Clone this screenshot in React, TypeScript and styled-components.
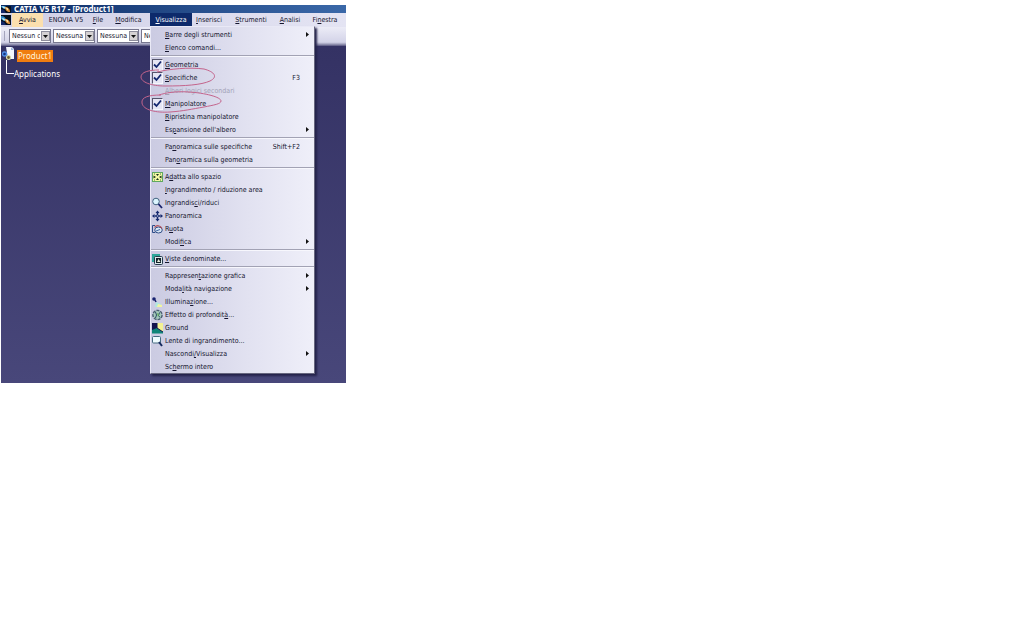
import React from "react";
import styled, { createGlobalStyle, css } from "styled-components";

const GlobalStyle = createGlobalStyle`
  *, *::before, *::after { box-sizing: border-box; }
  body { margin: 0; background: #fff; }
  button, select, input { font: inherit; color: inherit; margin: 0; }
`;

const Page = styled.main`
  padding: 5px 1px;
  font-family: "DejaVu Sans Condensed", "Noto Sans", sans-serif;
  font-size: 7px;
  color: #15152e;
`;

const Window = styled.section`
  position: relative;
  display: flex;
  flex-direction: column;
  width: 100%;
  max-width: 345px;
  background: #403f70;
`;

const TitleBar = styled.header`
  display: flex;
  align-items: center;
  gap: 3px;
  height: 8px;
  background: linear-gradient(90deg, #0b2a63, #2d5796 70%, #3a68a8);
`;

const Title = styled.h1`
  margin: 0;
  font-family: "Noto Sans", sans-serif;
  font-size: 8px;
  line-height: 12px;
  font-weight: 700;
  color: #fff;
  white-space: nowrap;
`;

const MenuBar = styled.nav`
  display: flex;
  align-items: stretch;
  height: 14px;
  background: linear-gradient(90deg, #cfcfe6, #e4e4f3);
`;

const LogoSlot = styled.span`
  display: flex;
  align-items: center;
  width: 11px;
`;

const MenuButton = styled.button<{ $w: number; $tone?: "start" | "open" }>`
  flex: 0 0 ${(p) => p.$w}px;
  padding: 0;
  border: 0;
  background: transparent;
  line-height: 13px;
  text-align: center;
  white-space: nowrap;
  ${(p) => p.$tone === "start" && css`background: #fbdfae;`}
  ${(p) => p.$tone === "open" && css`background: #0d2a6b; color: #fff;`}
`;

const ToolBar = styled.div`
  display: flex;
  align-items: center;
  gap: 2px;
  height: 19px;
  padding: 0 0 1px 3px;
  overflow: hidden;
  background: linear-gradient(180deg, #ececf7, #d3d3e8 80%, #9d9db9 90%, #55547f);
`;

const Grip = styled.span`
  width: 3px;
  height: 10px;
  border-left: 1px solid #a5a5bd;
`;

const ComboBox = styled.label`
  position: relative;
  flex: 0 0 42px;
  height: 14px;
`;

const Select = styled.select`
  appearance: none;
  display: block;
  width: 100%;
  height: 100%;
  padding: 0 10px 0 2px;
  border: 1px solid #77778f;
  border-radius: 0;
  background: #fff;
  line-height: 12px;
  text-overflow: clip;
`;

const ComboArrow = styled.span`
  position: absolute;
  top: 2px;
  right: 1px;
  display: grid;
  place-items: center;
  width: 9px;
  height: 10px;
  border: 1px solid #8e8e9c;
  background: #d5d2d3;
  pointer-events: none;
`;

const Workspace = styled.div`
  min-height: 337px;
  padding: 0 0 0 1px;
  background: linear-gradient(180deg, #343264, #48477a);
`;

const Tree = styled.div`
  display: flex;
  color: #fff;
  font-family: "Noto Sans", sans-serif;
  font-size: 8px;
  line-height: 12px;
`;

const TreeNodes = styled.div`
  display: flex;
  flex-direction: column;
  align-items: flex-start;
  padding-top: 4px;
`;

const TreeRoot = styled.button`
  margin-left: 3px;
  padding: 0 1px;
  border: 0;
  background: #f07d10;
  color: #fff3dc;
`;

const TreeChild = styled.button`
  margin-top: 6px;
  padding: 0;
  border: 0;
  background: none;
`;

const Menu = styled.div`
  position: absolute;
  top: 21px;
  left: 149px;
  width: 165px;
  padding: 1px 0 0;
  border: 1px solid #e9e9f6;
  border-right-color: #66667e;
  border-bottom-color: #66667e;
  background: linear-gradient(90deg, #cbcbe2, #e2e2f1 60%, #efeff9);
  box-shadow: 2px 2px 2px #24234a;
`;

const rowStyles = css`
  display: grid;
  grid-template-columns: 14px 1fr auto;
  align-items: center;
  width: 100%;
  height: 13px;
  padding: 0 14px 0 0;
  border: 0;
  background: none;
  line-height: 12px;
  text-align: left;
  white-space: nowrap;
`;

const MenuRow = styled.button`
  ${rowStyles}
  &:disabled { color: #a2a2b6; }
`;

const CheckRow = styled.label`
  ${rowStyles}
`;

const IconSlot = styled.span`
  position: relative;
  display: flex;
  align-items: center;
  height: 13px;
  padding-left: 1px;
`;

const Check = styled.input`
  appearance: none;
  width: 11px;
  height: 12px;
  border: 1px solid #f6f6fc;
  border-top-color: #55556c;
  border-left-color: #55556c;
  background: #e6e6f4;
`;

const CheckMark = styled.svg`
  position: absolute;
  top: 2px;
  left: 2px;
  pointer-events: none;
`;

const SubArrow = styled.svg`
  justify-self: end;
  margin-right: -10px;
`;

const Separator = styled.hr`
  height: 2px;
  margin: 1px 0;
  border: 0;
  border-top: 1px solid #a2a2b4;
  background: #f7f7fd;
`;

const Annotation = styled.svg`
  position: absolute;
  top: 62px;
  left: 138px;
  pointer-events: none;
`;

const AppLogo = ({ height = 10 }: { height?: number }) => (
  <svg width="10" height={height} viewBox={`0 ${10 - height} 10 ${height}`} aria-hidden="true">
    <rect width="10" height="10" fill="#06101f" />
    <path d="M0 1c3 0 5 2 5 4l-2 1-3-2z" fill="#2a86c4" />
    <path d="M1 3c2 0 3 1 4 3l-3-1z" fill="#bfeaf5" />
    <path d="M4 4c3 0 5 2 5 5-3 0-5-2-5-5z" fill="#e09440" />
    <path d="M4 4l3 1.500 0 2z" fill="#fff2c0" />
    <path d="M0 6l3 1 2 3H0z" fill="#14286a" />
  </svg>
);

const TreeIcon = () => (
  <svg width="12" height="32" viewBox="0 0 12 32" aria-hidden="true">
    <path d="M4 1h6l3 3v9H6z" fill="#f4f7ff" />
    <path d="M9 1l3 3H9z" fill="#9db8e0" />
    <circle cx="2.500" cy="8" r="2" fill="#16347f" stroke="#4f8fe8" strokeWidth="1.400" />
    <circle cx="6.500" cy="11.500" r="2" fill="#705b2c" stroke="#d7ddb0" strokeWidth="1.200" />
    <path d="M4.500 14v13.500H12" fill="none" stroke="#fff" />
  </svg>
);

type IconName = "fit" | "zoom" | "pan" | "rotate" | "views" | "light" | "depth" | "ground" | "lens";

const drawings: Record<IconName, React.ReactNode> = {
  fit: (
    <>
      <rect x=".5" y="1.500" width="10" height="9" fill="#f4f8a4" stroke="#5fa860" />
      <path d="M4 3h3L5.500 5zM4 9h3L5.500 7zM1.500 4.500v3L4 6zM9.500 4.500v3L7 6z" fill="#16331a" />
      <path d="M2 3h1M8 3h1M2 9h1M8 9h1" stroke="#3c7a3e" />
    </>
  ),
  zoom: (
    <>
      <circle cx="4" cy="4.500" r="3.300" fill="#dcf6ff" stroke="#41617f" />
      <path d="M6.500 7l3.500 4" stroke="#15206a" strokeWidth="1.800" />
    </>
  ),
  pan: (
    <>
      <path d="M5.500 .5l2 2.500h-4zM5.500 11.500l2-2.500h-4zM0 6l2.500-2v4zM11 6L8.500 4v4z" fill="#14286e" />
      <path d="M5.500 3v6M2.500 6h6" stroke="#14286e" strokeWidth="1.600" />
      <rect x="5" y="5.500" width="1" height="1" fill="#e4e9fb" />
    </>
  ),
  rotate: (
    <>
      <path d="M3 2.500H.5v7H3" fill="none" stroke="#2d4d89" />
      <ellipse cx="6.500" cy="7" rx="3.800" ry="3" fill="#dae6f4" stroke="#314f87" />
      <path d="M2.500 4.500c2-3 6-2 7.500 1" fill="none" stroke="#b5525a" strokeWidth="1.200" />
      <path d="M4 8l4-1.500" stroke="#3d66a4" />
    </>
  ),
  views: (
    <>
      <rect x="0" y="1" width="8" height="8" fill="#2ca79a" />
      <rect x="2.500" y="3.500" width="8" height="8" rx="1" fill="#dfe9ed" stroke="#263b4c" />
      <rect x="4" y="5" width="5" height="5" fill="#112027" />
      <path d="M5 9l1.500-3 2 3z" fill="#e6ecdd" />
    </>
  ),
  light: (
    <>
      <circle cx="2" cy="3" r="1.800" fill="#18226f" />
      <path d="M3 4l1 2" stroke="#18226f" strokeWidth="1.500" />
      <path d="M4 6l5 2v3H3z" fill="#aee8df" />
      <path d="M6 8l4 1v2H5z" fill="#f3f5a0" />
    </>
  ),
  depth: (
    <>
      <circle cx="5.500" cy="6" r="4.600" fill="#a6c9bd" stroke="#4a5d70" strokeWidth="1.400" strokeDasharray="3 1" />
      <path d="M3.500 3l1 3-1 3M7.500 3.500l-1 3 1.500 2" fill="none" stroke="#284860" />
      <path d="M5 4l2 1-1 3z" fill="#63b05b" />
    </>
  ),
  ground: (
    <>
      <rect y="1" width="5" height="7" fill="#12134d" />
      <rect x="5" y="1" width="6" height="8" fill="#f3f293" />
      <path d="M0 8l5-2 6 4v1.500H0z" fill="#108578" />
      <path d="M5 1v5l6 4" fill="none" stroke="#12134d" />
    </>
  ),
  lens: (
    <>
      <rect x=".5" y="1.500" width="8" height="6.500" rx="1" fill="#effcff" stroke="#456b80" />
      <path d="M7 7l3 4" stroke="#15295d" strokeWidth="2" />
    </>
  ),
};

const Icon = ({ name }: { name: IconName }) => (
  <svg width="11" height="12" viewBox="0 0 11 12" aria-hidden="true">{drawings[name]}</svg>
);

/** Turns "_F_ile" into "File" with its access key underlined. */
const Mnemonic = ({ text }: { text: string }) => (
  <span>{text.split("_").map((part, i) => (i % 2 ? <u key={i}>{part}</u> : part))}</span>
);

type Item = { text: string; icon?: IconName; keys?: string; sub?: boolean; checked?: boolean; off?: boolean };

const groups: Item[][] = [
  [{ text: "_B_arre degli strumenti", sub: true }, { text: "_E_lenco comandi..." }],
  [
    { text: "_G_eometria", checked: true },
    { text: "_S_pecifiche", checked: true, keys: "F3" },
    { text: "_A_lberi logici secondari", off: true },
    { text: "_M_anipolatore", checked: true },
    { text: "_R_ipristina manipolatore" },
    { text: "Es_p_ansione dell'albero", sub: true },
  ],
  [{ text: "Pa_n_oramica sulle specifiche", keys: "Shift+F2" }, { text: "Pan_o_ramica sulla geometria" }],
  [
    { text: "A_d_atta allo spazio", icon: "fit" },
    { text: "_I_ngrandimento / riduzione area" },
    { text: "Ingrandis_c_i/riduci", icon: "zoom" },
    { text: "Panoramica", icon: "pan" },
    { text: "R_u_ota", icon: "rotate" },
    { text: "Modi_f_ica", sub: true },
  ],
  [{ text: "_V_iste denominate...", icon: "views" }],
  [
    { text: "Rappresen_t_azione grafica", sub: true },
    { text: "Moda_l_ità navigazione", sub: true },
    { text: "Illumina_z_ione...", icon: "light" },
    { text: "Effetto di profondit_à_...", icon: "depth" },
    { text: "Ground", icon: "ground" },
    { text: "Lente di ingrandimento...", icon: "lens" },
    { text: "Nascondi_/_Visualizza", sub: true },
    { text: "Sc_h_ermo intero" },
  ],
];

const MenuEntry = ({ item }: { item: Item }) => {
  const tail = item.sub ? (
    <SubArrow width="5" height="5" viewBox="0 0 5 5" aria-hidden="true"><path d="M1 0l3 2.500L1 5z" fill="#111" /></SubArrow>
  ) : (
    <span>{item.keys}</span>
  );
  if (item.checked) {
    return (
      <CheckRow>
        <IconSlot>
          <Check type="checkbox" defaultChecked />
          <CheckMark width="9" height="9" viewBox="0 0 9 9" aria-hidden="true">
            <path d="M1 4.500L3.500 7 8 1.500" fill="none" stroke="#15286f" strokeWidth="1.800" />
          </CheckMark>
        </IconSlot>
        <Mnemonic text={item.text} />
        {tail}
      </CheckRow>
    );
  }
  return (
    <MenuRow type="button" disabled={item.off}>
      <IconSlot>{item.icon && <Icon name={item.icon} />}</IconSlot>
      <Mnemonic text={item.text} />
      {tail}
    </MenuRow>
  );
};

const menus: { text: string; w: number; tone?: "start" | "open" }[] = [
  { text: "_A_vvia", w: 31, tone: "start" },
  { text: "ENOVIA V5", w: 46 },
  { text: "_F_ile", w: 18 },
  { text: "_M_odifica", w: 43 },
  { text: "_V_isualizza", w: 42, tone: "open" },
  { text: "_I_nserisci", w: 34 },
  { text: "_S_trumenti", w: 50 },
  { text: "_A_nalisi", w: 28 },
  { text: "Fi_n_estra", w: 42 },
];

const combos = ["Nessun colore", "Nessuna", "Nessuna", "Nessuna"];

export default function App() {
  return (
    <Page>
      <GlobalStyle />
      <Window>
        <TitleBar>
          <AppLogo height={7} />
          <Title>CATIA V5 R17 - [Product1]</Title>
        </TitleBar>
        <MenuBar>
          <LogoSlot><AppLogo /></LogoSlot>
          {menus.map((m) => (
            <MenuButton key={m.text} type="button" $w={m.w} $tone={m.tone}>
              <Mnemonic text={m.text} />
            </MenuButton>
          ))}
        </MenuBar>
        <ToolBar>
          <Grip />
          {combos.map((value, i) => (
            <ComboBox key={i}>
              <Select aria-label={`Proprietà ${i + 1}`}><option>{value}</option></Select>
              <ComboArrow>
                <svg width="5" height="3" viewBox="0 0 5 3" aria-hidden="true"><path d="M0 0h5L2.500 3z" fill="#111" /></svg>
              </ComboArrow>
            </ComboBox>
          ))}
        </ToolBar>
        <Workspace>
          <Tree>
            <TreeIcon />
            <TreeNodes>
              <TreeRoot type="button">Product1</TreeRoot>
              <TreeChild type="button">Applications</TreeChild>
            </TreeNodes>
          </Tree>
        </Workspace>
        <Menu>
          {groups.map((group, i) => (
            <React.Fragment key={i}>
              {i > 0 && <Separator />}
              {group.map((item) => <MenuEntry key={item.text} item={item} />)}
            </React.Fragment>
          ))}
        </Menu>
        <Annotation width="86" height="46" viewBox="0 0 86 46" fill="none" stroke="#c4648c" aria-hidden="true">
          <path d="M20 3C10 3 2 5 2 10s10 9 24 9c20 0 36-1 45-5 8-4 5-9-6-12C50 0 30 2 18 5" />
          <path d="M22 28C10 28 2 30 3 36c1 7 14 10 28 9 14-1 22-3 34-5 10-2 17-3 17-6 0-4-16-8-32-9-14-1-24 1-30 3" />
        </Annotation>
      </Window>
    </Page>
  );
}
